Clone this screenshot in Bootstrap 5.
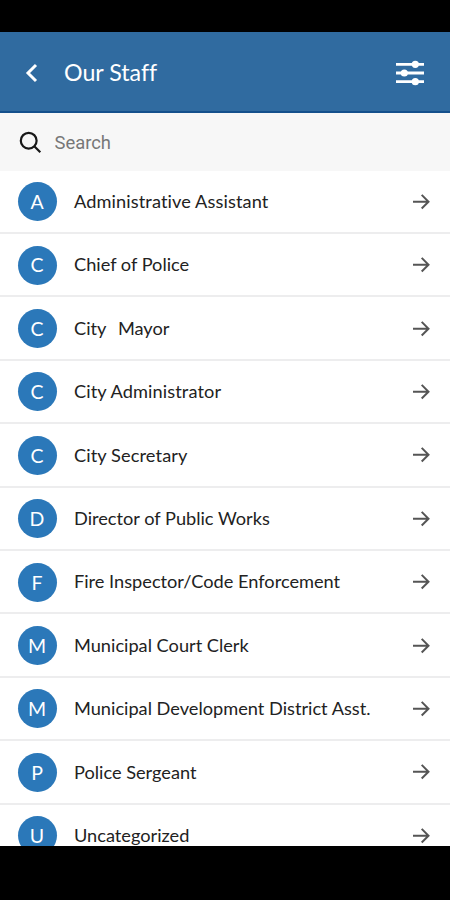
<!DOCTYPE html>
<html lang="en">
<head>
<meta charset="utf-8">
<meta name="viewport" content="width=device-width, initial-scale=1">
<title>Our Staff</title>
<link href="https://cdn.jsdelivr.net/npm/bootstrap@5.3.0/dist/css/bootstrap.min.css" rel="stylesheet">
<style>
body { font-family: Lato, sans-serif; height: 900px; font-variant-ligatures: none; }
.app-screen { height: 846px; padding-top: 32px; }
.app-header { height: 81px; background: #306ba0; border-bottom: 2px solid #14508c; padding: 2px 25px 0 24px; }
.app-title { font-size: 23.2px; font-weight: 400; margin-left: 24px; line-height: 30px; padding-bottom: 2px; }
.search-row { height: 57.5px; background: #f7f7f7; padding: 1px 0 0 19px; }
.search-input, .search-input:focus { font-family: Roboto, sans-serif; font-size: 18.4px; color: #777; margin-left: 12.5px; padding: 2px 0 0; }
.search-input::placeholder { color: #777; opacity: 1; }
.staff-item { height: 63.42px; flex-shrink: 0; padding: 1px 19px 0 17.5px; border-bottom: 2px solid #ededee; }
.avatar { width: 39px; height: 39px; background: #2b78b9; font-size: 19.5px; }
.staff-name { font-size: 18.2px; color: #222; margin-left: 17.5px; white-space: pre; }
.wide-gap { word-spacing: 1.3px; }
.two-word { letter-spacing: .1px; }
</style>
<script src="https://cdn.jsdelivr.net/npm/bootstrap@5.3.0/dist/js/bootstrap.bundle.min.js"></script>
</head>
<body class="bg-black overflow-hidden">
<div class="app-screen d-flex flex-column overflow-hidden">
  <header class="app-header d-flex align-items-center text-white flex-shrink-0">
    <svg width="16" height="20" viewBox="0 0 16 20" fill="none" stroke="#fff" stroke-width="3"><path d="M12 2 4 10l8 8"/></svg>
    <h1 class="app-title mb-0">Our Staff</h1>
    <svg class="ms-auto" width="30" height="26" viewBox="0 0 30 26" fill="#fff" stroke="#fff" stroke-width="2.8"><path d="M1 4.3h28M1 13h28M1 21.7h28"/><g stroke="none"><circle cx="20.3" cy="4.3" r="3.6"/><circle cx="9.3" cy="13" r="3.6"/><circle cx="20.3" cy="21.7" r="3.6"/></g></svg>
  </header>
  <div class="search-row d-flex align-items-center flex-shrink-0">
    <svg class="flex-shrink-0" width="23" height="23" viewBox="0 0 23 23" fill="none" stroke="#181818" stroke-width="2.2"><circle cx="9.7" cy="9.7" r="7.9"/><path d="m15.3 15.3 6 6"/></svg>
    <input class="search-input form-control border-0 bg-transparent shadow-none" type="text" placeholder="Search" aria-label="Search">
  </div>
  <main class="staff-list bg-white d-flex flex-column flex-grow-1 overflow-hidden" id="staff"></main>
</div>
<script>
const names = ["Administrative Assistant", "Chief of Police", "City  Mayor", "City Administrator", "City Secretary", "Director of Public Works", "Fire Inspector/Code Enforcement", "Municipal Court Clerk", "Municipal Development District Asst.", "Police Sergeant", "Uncategorized"];
const spacing = n => n.includes("  ") ? "wide-gap" : /^(Admin|City)/.test(n) ? "two-word" : "";
document.getElementById("staff").innerHTML = names.map(n => `
  <div class="staff-item d-flex align-items-center">
    <span class="avatar rounded-circle text-white d-flex align-items-center justify-content-center flex-shrink-0">${n[0]}</span>
    <span class="staff-name ${spacing(n)}">${n}</span>
    <svg class="ms-auto" width="19" height="18" viewBox="0 0 19 18" fill="none" stroke="#555" stroke-width="2"><path d="M1 8.7h15.5M9.7 1.9l6.8 6.8-6.8 6.8"/></svg>
  </div>`).join("");
</script>
</body>
</html>
